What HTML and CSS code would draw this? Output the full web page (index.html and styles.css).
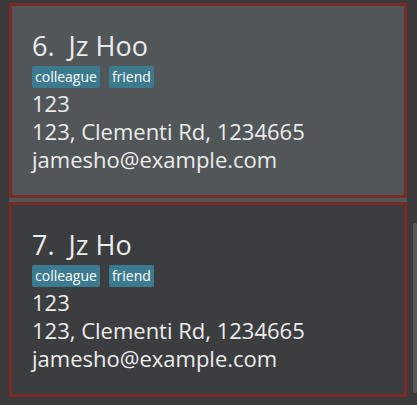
FILE: index.html
```html
<!DOCTYPE html>
<html>
<head>
<meta charset="utf-8">
<link rel="stylesheet" href="styles.css">
</head>
<body>
<div class="viewport">
  <div class="list">
    <div class="cell selected">
      <div class="card">
        <div class="name">6.&nbsp;&nbsp;Jz Hoo</div>
        <div class="tags"><span class="tag">colleague</span><span class="tag">friend</span></div>
        <div class="line">123</div>
        <div class="line">123, Clementi Rd, 1234665</div>
        <div class="line">jamesho@example.com</div>
      </div>
    </div>
    <div class="cell">
      <div class="card">
        <div class="name">7.&nbsp;&nbsp;Jz Ho</div>
        <div class="tags"><span class="tag">colleague</span><span class="tag">friend</span></div>
        <div class="line">123</div>
        <div class="line">123, Clementi Rd, 1234665</div>
        <div class="line">jamesho@example.com</div>
      </div>
    </div>
  </div>
  <div class="scrollbar"><div class="thumb"></div></div>
</div>
</body>
</html>
```
FILE: styles.css
```css
html, body {
  margin: 0;
  padding: 0;
  background: #3a3a3a;
  width: 417px;
  height: 405px;
  overflow: hidden;
}
.viewport {
  display: flex;
  height: 405px;
  font-family: "Open Sans", "Noto Sans", sans-serif;
  color: #ececec;
}
.list {
  width: 398px;
  margin-left: 9px;
  padding-top: 3px;
  display: flex;
  flex-direction: column;
}
.cell {
  background: #3c3d3f;
}
.cell.selected {
  background: #515658;
  padding-bottom: 4px;
}
.card {
  border: 3px solid #7b2a2a;
  padding: 24px 0 22px 20px;
  display: flex;
  flex-direction: column;
  align-items: flex-start;
}
.name {
  font-size: 27px;
  line-height: 32px;
}
.tags {
  display: flex;
  gap: 9px;
  margin-top: 4px;
  margin-bottom: 1px;
}
.tag {
  background: #3c7a8f;
  color: #ffffff;
  font-size: 14px;
  line-height: 22px;
  height: 22px;
  padding: 0 3px;
  border-radius: 2px;
}
.line {
  font-size: 22px;
  line-height: 28px;
}
.scrollbar {
  width: 10px;
  display: flex;
  justify-content: flex-end;
  padding-top: 223px;
}
.thumb {
  width: 4px;
  height: 170px;
  background: #595959;
  border-radius: 2px 0 0 2px;
}
```
